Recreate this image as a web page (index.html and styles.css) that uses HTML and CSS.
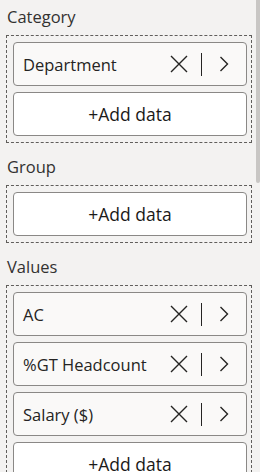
FILE: index.html
```html
<!DOCTYPE html>
<html>
<head>
  <meta charset="utf-8">
  <link rel="stylesheet" href="styles.css">
</head>
<body>
  <div class="scroll-thumb"></div>

  <div class="well">
    <div class="well-label">Category</div>
    <div class="drop-zone">
      <div class="field">
        <span class="field-name">Department</span>
        <svg class="icon-remove" width="18" height="18" viewBox="0 0 18 18"><path d="M1 1 L17 17 M17 1 L1 17" /></svg>
        <span class="field-sep"></span>
        <svg class="icon-expand" width="10" height="16" viewBox="0 0 10 16"><path d="M1.5 1 L8.5 8 L1.5 15" /></svg>
      </div>
      <div class="add-data">+Add data</div>
    </div>
  </div>

  <div class="well">
    <div class="well-label">Group</div>
    <div class="drop-zone">
      <div class="add-data">+Add data</div>
    </div>
  </div>

  <div class="well">
    <div class="well-label">Values</div>
    <div class="drop-zone">
      <div class="field">
        <span class="field-name">AC</span>
        <svg class="icon-remove" width="18" height="18" viewBox="0 0 18 18"><path d="M1 1 L17 17 M17 1 L1 17" /></svg>
        <span class="field-sep"></span>
        <svg class="icon-expand" width="10" height="16" viewBox="0 0 10 16"><path d="M1.5 1 L8.5 8 L1.5 15" /></svg>
      </div>
      <div class="field">
        <span class="field-name">%GT Headcount</span>
        <svg class="icon-remove" width="18" height="18" viewBox="0 0 18 18"><path d="M1 1 L17 17 M17 1 L1 17" /></svg>
        <span class="field-sep"></span>
        <svg class="icon-expand" width="10" height="16" viewBox="0 0 10 16"><path d="M1.5 1 L8.5 8 L1.5 15" /></svg>
      </div>
      <div class="field">
        <span class="field-name">Salary ($)</span>
        <svg class="icon-remove" width="18" height="18" viewBox="0 0 18 18"><path d="M1 1 L17 17 M17 1 L1 17" /></svg>
        <span class="field-sep"></span>
        <svg class="icon-expand" width="10" height="16" viewBox="0 0 10 16"><path d="M1.5 1 L8.5 8 L1.5 15" /></svg>
      </div>
      <div class="add-data">+Add data</div>
    </div>
  </div>
</body>
</html>
```

FILE: styles.css
```css
html, body {
  height: 100%;
}

body {
  margin: 0;
  padding-top: 7px;
  background: #f3f2f1;
  font-family: "Open Sans", "Noto Sans", sans-serif;
  color: #252423;
  overflow: hidden;
  position: relative;
  box-sizing: border-box;
}

.scroll-thumb {
  position: absolute;
  top: 0;
  right: 0;
  width: 4px;
  height: 183px;
  background: #c8c6c4;
  border-radius: 0 0 2px 2px;
}

.well {
  margin-bottom: 14px;
}

.well-label {
  font-size: 16.5px;
  line-height: 20px;
  height: 20px;
  margin: 0 0 8px 7px;
  color: #323130;
}

.drop-zone {
  margin-left: 6px;
  width: 246px;
  box-sizing: border-box;
  border: 1px dashed #605e5c;
  padding: 6px 4px 6px 6px;
  display: flex;
  flex-direction: column;
  gap: 6px;
}

.field,
.add-data {
  height: 44px;
  box-sizing: border-box;
  border: 1px solid #8a8886;
  border-radius: 4px;
  font-size: 16.5px;
}

.field {
  display: flex;
  align-items: center;
  background: #faf9f8;
  padding: 0 17px 0 9px;
}

.field-name {
  flex: 1;
  white-space: nowrap;
}

.icon-remove path,
.icon-expand path {
  fill: none;
  stroke: #252423;
  stroke-width: 1.4;
}

.field-sep {
  width: 1px;
  height: 23px;
  background: #252423;
  margin: 0 17px 0 13px;
}

.add-data {
  background: #ffffff;
  display: flex;
  align-items: center;
  justify-content: center;
  font-size: 17.5px;
  color: #1b1a19;
}
```
